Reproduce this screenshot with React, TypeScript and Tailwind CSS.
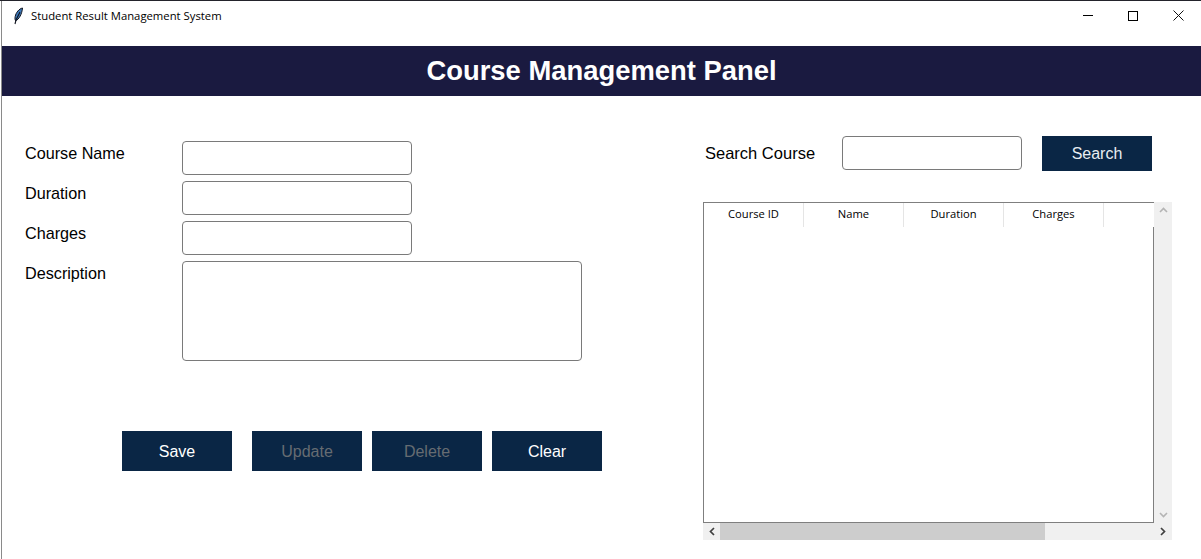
const FORM_ROWS = ['Course Name', 'Duration', 'Charges'];
const COLUMNS = ['Course ID', 'Name', 'Duration', 'Charges'];
const ACTIONS = [
  { label: 'Save', disabled: false, className: 'ml-[120px]' },
  { label: 'Update', disabled: true, className: 'ml-5' },
  { label: 'Delete', disabled: true, className: 'ml-2.5' },
  { label: 'Clear', disabled: false, className: 'ml-2.5' },
];

function TitleBar() {
  return (
    <div className="flex h-[45px] items-start justify-between bg-white font-['Open_Sans',sans-serif]">
      <div className="flex items-center pt-[5px]">
        <svg width="11" height="18" viewBox="0 0 11 18" className="ml-[11px]">
          <path d="M9.5 1C6 1.8 3 5.5 2.2 9.5c-.4 1.9-.2 3.3.4 4.3C6 12.5 9 7 9.5 1Z" fill="#3d78b8" stroke="#10141f" strokeWidth="1" />
          <path d="M7 5 3 13 2 17" fill="none" stroke="#10141f" strokeWidth="1.1" />
        </svg>
        <span className="ml-[7px] text-[11.3px] leading-5 text-black">Student Result Management System</span>
      </div>
      <div className="flex h-[29px] items-center pr-[17px]">
        <div className="h-px w-[10px] bg-black" />
        <div className="ml-[35px] h-[10px] w-[10px] border border-black" />
        <svg width="11" height="11" viewBox="0 0 11 11" className="ml-[35px]">
          <path d="M.5.5l10 10M10.5.5l-10 10" stroke="#111" strokeWidth="1" fill="none" />
        </svg>
      </div>
    </div>
  );
}

function CourseForm() {
  return (
    <div className="w-[701px] shrink-0 pt-[45px]">
      <div className="flex flex-col gap-1.5 pl-[23px]">
        {FORM_ROWS.map((label) => (
          <div key={label} className="flex">
            <label className="w-[157px] pt-[2px] text-[16.2px] leading-5 text-black">{label}</label>
            <input className="h-[34px] w-[230px] rounded border border-[#7a7a7a] bg-white" />
          </div>
        ))}
        <div className="flex">
          <label className="w-[157px] pt-[2px] text-[16.2px] leading-5 text-black">Description</label>
          <textarea className="h-[100px] w-[400px] resize-none rounded border border-[#7a7a7a] bg-white" />
        </div>
      </div>
      <div className="mt-[70px] flex">
        {ACTIONS.map((action) => (
          <button
            key={action.label}
            disabled={action.disabled}
            className={`h-10 w-[110px] bg-[#0a2645] pt-px text-base ${action.disabled ? 'text-[#666c72]' : 'text-white'} ${action.className}`}
          >
            {action.label}
          </button>
        ))}
      </div>
    </div>
  );
}

function CourseTable() {
  return (
    <div className="mt-[31px] w-[469px]">
      <div className="flex h-[321px]">
        <div className="flex w-[451px] flex-col border-t border-b border-l border-[#7f7f7f]">
          <div className="flex h-[24px] font-['Open_Sans',sans-serif]">
            {COLUMNS.map((column) => (
              <div key={column} className="flex w-[100px] items-center justify-center border-r border-[#e5e5e5] pb-px text-[11.2px] text-black">
                {column}
              </div>
            ))}
          </div>
          <div className="flex flex-1 justify-end">
            <div className="w-px bg-[#7f7f7f]" />
          </div>
        </div>
        <div className="flex w-[18px] flex-col items-center justify-between bg-[#f0f0f0] py-[5px]">
          <svg width="9" height="6" viewBox="0 0 9 6"><path d="M1 5l3.5-3.5L8 5" fill="none" stroke="#b4b4b4" strokeWidth="1.6" /></svg>
          <svg width="9" height="6" viewBox="0 0 9 6"><path d="M1 1l3.5 3.5L8 1" fill="none" stroke="#b4b4b4" strokeWidth="1.6" /></svg>
        </div>
      </div>
      <div className="flex h-[17px] items-center bg-[#f0f0f0]">
        <div className="flex w-[17px] justify-center">
          <svg width="6" height="9" viewBox="0 0 6 9"><path d="M5 1 1.5 4.5 5 8" fill="none" stroke="#404040" strokeWidth="1.7" /></svg>
        </div>
        <div className="h-full w-[325px] bg-[#cdcdcd]" />
        <div className="flex flex-1 justify-end pr-[6px]">
          <svg width="6" height="9" viewBox="0 0 6 9"><path d="M1 1l3.5 3.5L1 8" fill="none" stroke="#404040" strokeWidth="1.7" /></svg>
        </div>
      </div>
    </div>
  );
}

function SearchPanel() {
  return (
    <div className="flex-1 pt-10">
      <div className="flex items-start">
        <label className="ml-[2px] w-[137px] pt-[6px] text-[16.5px] leading-[22px] text-black">Search Course</label>
        <input className="h-[34px] w-[180px] rounded border border-[#7a7a7a] bg-white" />
        <button className="ml-5 h-[35px] w-[110px] bg-[#0a2645] text-base text-[#e8edf2]">Search</button>
      </div>
      <CourseTable />
    </div>
  );
}

export default function App() {
  return (
    <div className="h-[559px] w-[1201px] overflow-hidden border-t border-[#23232b] bg-white pl-px font-['Liberation_Sans',Arial,sans-serif]">
      <div className="h-[558px] border-l border-[#8a8a8a]">
        <TitleBar />
        <div className="flex h-[50px] items-center justify-center bg-[#1a1a40] text-[27.4px] font-bold text-white">
          Course Management Panel
        </div>
        <div className="flex">
          <CourseForm />
          <SearchPanel />
        </div>
      </div>
    </div>
  );
}
